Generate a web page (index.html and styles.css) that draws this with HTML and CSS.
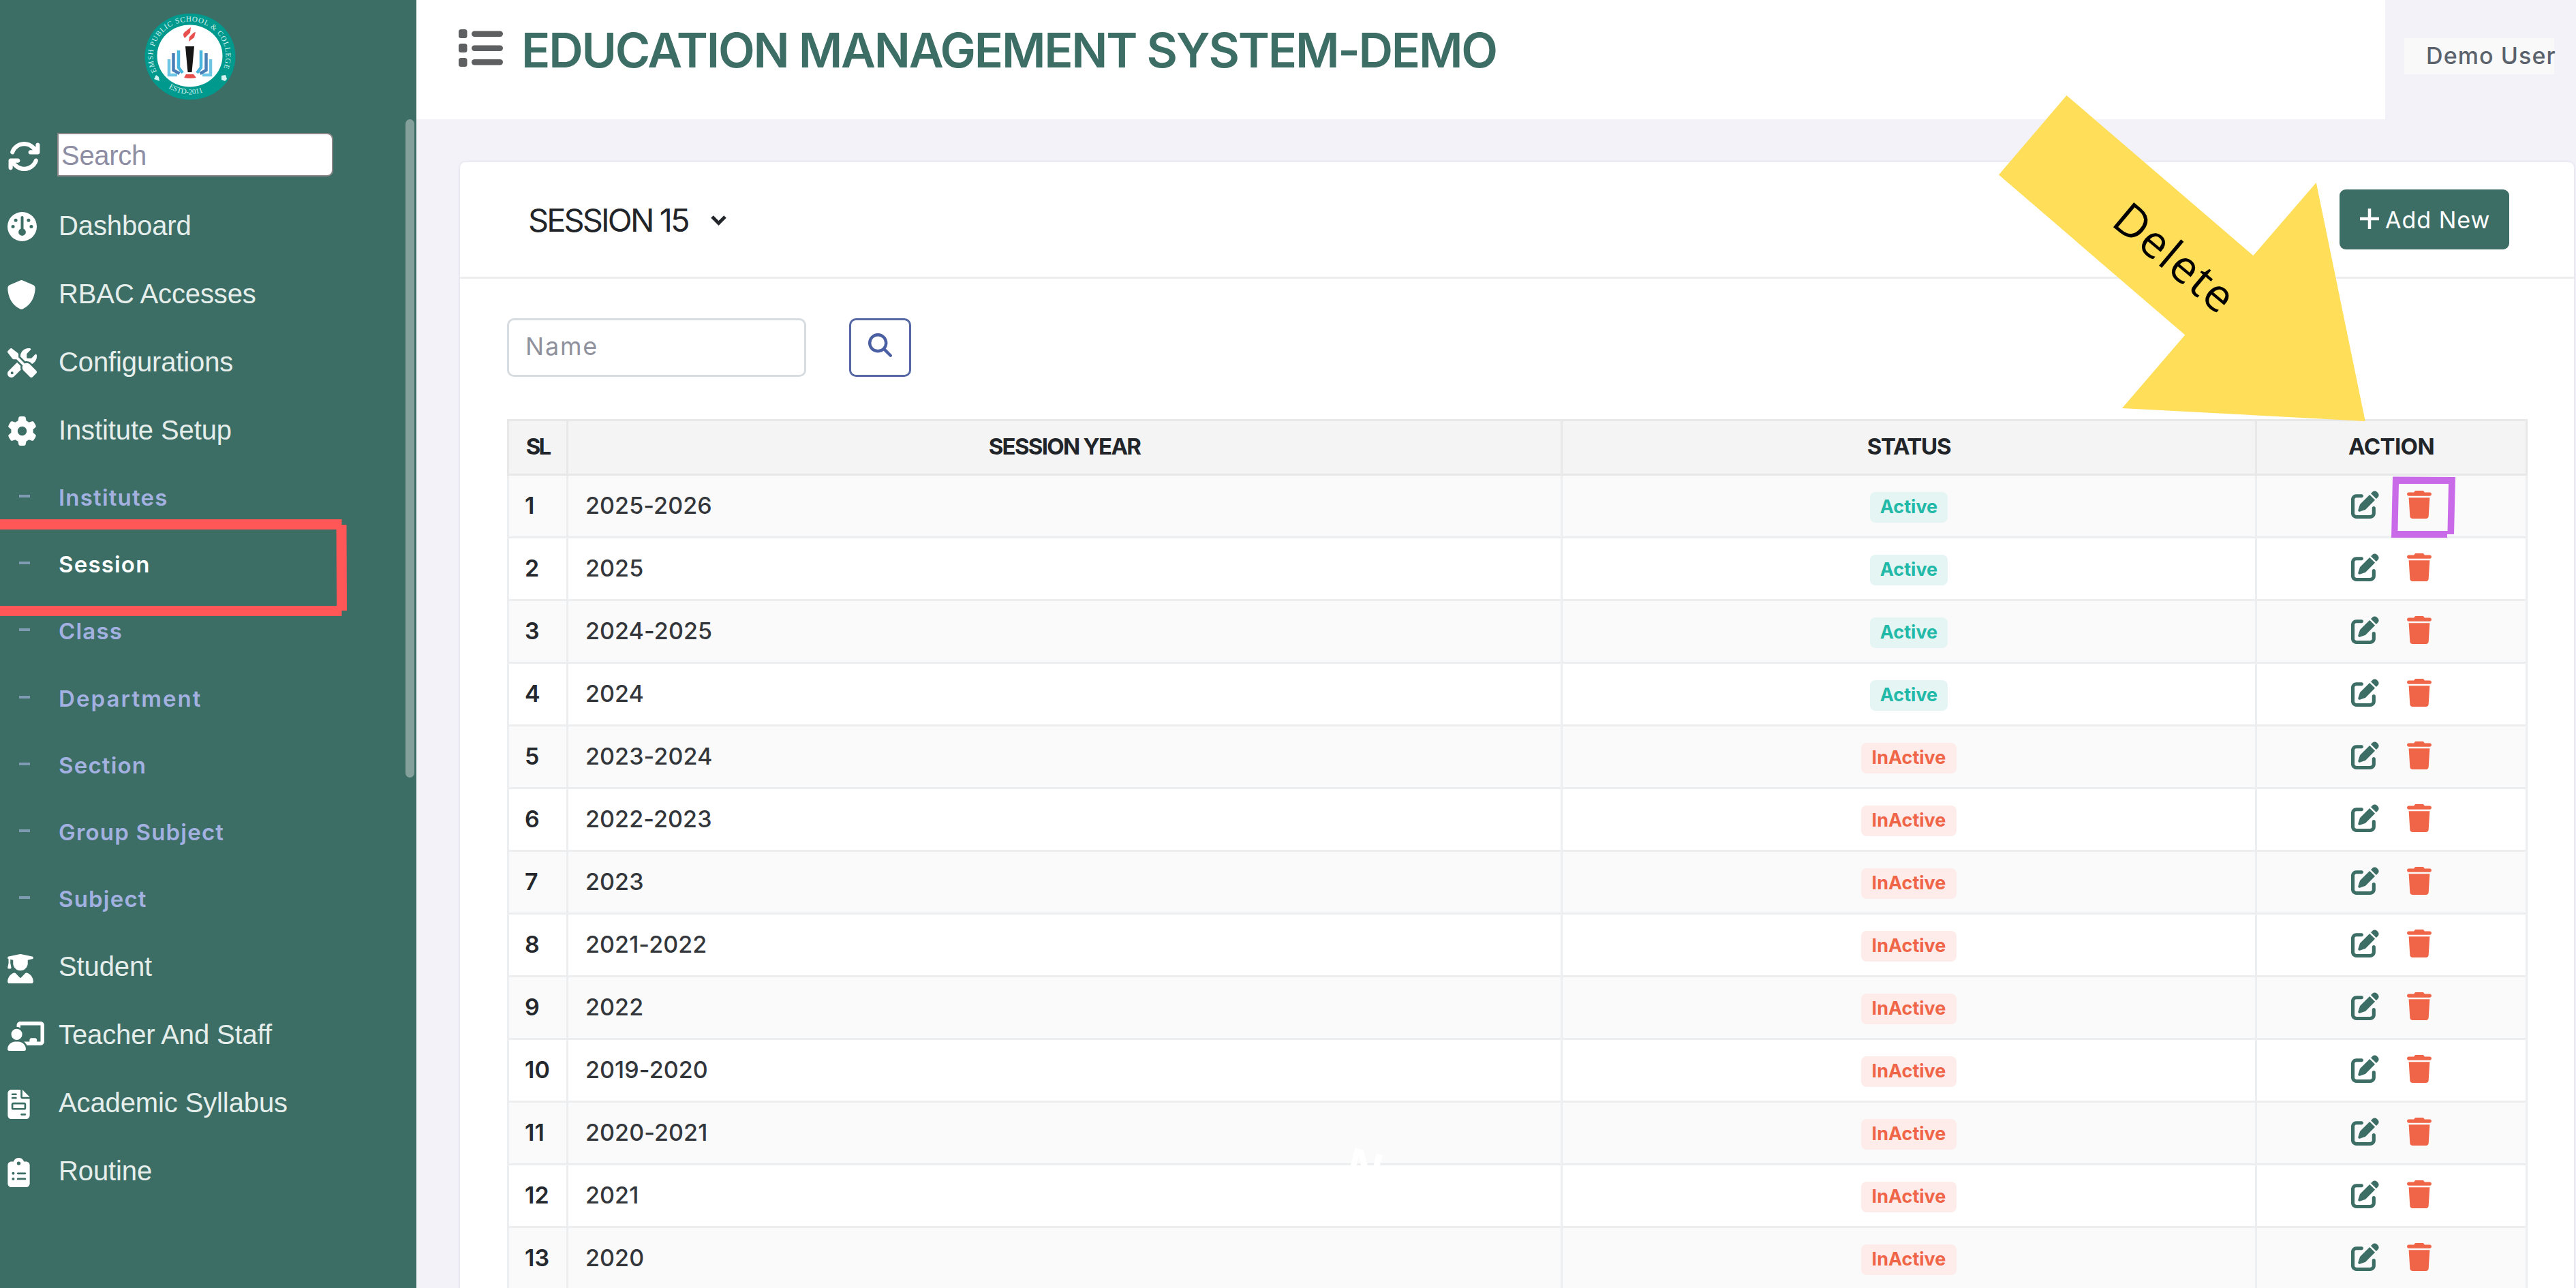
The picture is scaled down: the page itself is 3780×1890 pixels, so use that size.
FILE: index.html
```html
<!DOCTYPE html>
<html lang="en">
<head>
<meta charset="utf-8">
<title>Education Management System - Session</title>
<link rel="stylesheet" href="styles.css">
</head>
<body>
<svg class="sprite" width="0" height="0">
  <symbol id="i-sync" viewBox="0 0 512 512"><path d="M105.1 202.6c7.7-21.8 20.2-42.3 37.8-59.8c62.5-62.5 163.8-62.5 226.3 0L386.3 160H352c-17.7 0-32 14.3-32 32s14.3 32 32 32H463.9c17.7 0 32-14.3 32-32V80c0-17.7-14.3-32-32-32s-32 14.3-32 32v35.2L414.4 97.6c-87.5-87.5-229.3-87.5-316.8 0C73.2 122 55.6 150.7 44.8 181.4c-5.9 16.7 2.9 34.9 19.5 40.8s34.9-2.9 40.8-19.5zM39 289.3c-5 1.5-9.8 4.2-13.7 8.2c-4 4-6.7 8.800-8.100 14c-.3 1.200-.6 2.500-.8 3.800c-.3 1.700-.4 3.400-.4 5.100V432c0 17.700 14.300 32 32 32s32-14.300 32-32V396.900l17.600 17.500c87.500 87.400 229.300 87.400 316.700 0c24.400-24.400 42.100-53.100 52.900-83.800c5.900-16.700-2.900-34.900-19.500-40.800s-34.900 2.900-40.800 19.500c-7.700 21.800-20.200 42.300-37.800 59.800c-62.500 62.500-163.800 62.500-226.300 0L125.600 352H160c17.700 0 32-14.300 32-32s-14.300-32-32-32H48.400c-1.600 0-3.200 .1-4.800 .3s-3.100 .5-4.600 1z"/></symbol>
  <symbol id="i-gauge" viewBox="0 0 512 512"><path fill-rule="evenodd" d="M256 0a256 256 0 1 1 0 512a256 256 0 1 1 0-512zM256 72c-14 0-24 10-24 24V293a64 64 0 1 0 48 0V96c0-14-10-24-24-24zM144 116a30 30 0 1 0 0 60a30 30 0 1 0 0-60zM368 116a30 30 0 1 0 0 60a30 30 0 1 0 0-60zM96 226a30 30 0 1 0 0 60a30 30 0 1 0 0-60zM416 226a30 30 0 1 0 0 60a30 30 0 1 0 0-60z"/></symbol>
  <symbol id="i-shield" viewBox="12 0 512 512"><path d="M256 0c4.600 0 9.200 1 13.400 2.900L457.700 82.800c22 9.300 38.400 31 38.300 57.200c-.5 99.200-41.300 280.700-213.600 363.200c-16.700 8-36.100 8-52.800 0C57.300 420.700 16.500 239.200 16 140c-.1-26.200 16.300-47.900 38.300-57.200L242.700 2.900C246.800 1 251.400 0 256 0z"/></symbol>
  <symbol id="i-tools" viewBox="0 0 512 512"><path d="M78.600 5C69.100-2.400 55.600-1.500 47 7L7 47c-8.500 8.500-9.400 22-2.100 31.600l80 104c4.500 5.900 11.600 9.400 19 9.400h54.100l109 109c-14.700 29-10 65.400 14.300 89.600l112 112c12.500 12.500 32.800 12.500 45.300 0l64-64c12.500-12.500 12.500-32.800 0-45.300l-112-112c-24.200-24.200-60.600-29-89.600-14.300l-109-109V104c0-7.500-3.500-14.500-9.400-19L78.600 5zM19.900 396.100C7.200 408.800 0 426.100 0 444.100C0 481.600 30.400 512 67.900 512c18 0 35.300-7.200 48-19.900L233.700 374.300c-7.800-20.900-9-43.600-3.600-65.100l-61.700-61.700L19.900 396.100zM512 144c0-10.500-1.100-20.700-3.200-30.500c-2.400-11.200-16.100-14.100-24.200-6l-63.900 63.900c-3 3-7.100 4.700-11.300 4.700H352c-8.800 0-16-7.200-16-16V102.600c0-4.200 1.700-8.300 4.700-11.300l63.900-63.900c8.100-8.100 5.200-21.800-6-24.200C388.700 1.100 378.500 0 368 0C288.500 0 224 64.500 224 144l0 .8 85.300 85.300c36-9.100 75.800 .5 104 28.700L429 274.500c49-23 83-72.800 83-130.500zM56 432a24 24 0 1 1 48 0 24 24 0 1 1 -48 0z"/></symbol>
  <symbol id="i-gear" viewBox="0 0 512 512"><path d="M495.900 166.600c3.200 8.700 .5 18.400-6.400 24.600l-43.300 39.400c1.100 8.300 1.700 16.800 1.700 25.400s-.6 17.100-1.700 25.400l43.300 39.400c6.900 6.200 9.600 15.900 6.400 24.600c-4.400 11.900-9.700 23.300-15.800 34.300l-4.700 8.100c-6.600 11-14 21.400-22.100 31.200c-5.900 7.200-15.700 9.600-24.500 6.800l-55.700-17.700c-13.400 10.300-28.200 18.900-44 25.400l-12.500 57.100c-2 9.100-9 16.300-18.200 17.800c-13.800 2.300-28 3.500-42.500 3.500s-28.700-1.200-42.500-3.500c-9.200-1.500-16.200-8.700-18.200-17.800l-12.500-57.100c-15.800-6.500-30.600-15.100-44-25.400L83.100 425.900c-8.800 2.800-18.600 .3-24.500-6.800c-8.100-9.800-15.500-20.200-22.100-31.200l-4.700-8.100c-6.100-11-11.400-22.400-15.800-34.300c-3.200-8.700-.5-18.400 6.400-24.600l43.300-39.400C64.600 273.100 64 264.600 64 256s.6-17.100 1.700-25.400L22.400 191.200c-6.900-6.200-9.600-15.900-6.400-24.600c4.400-11.900 9.700-23.300 15.800-34.300l4.700-8.100c6.600-11 14-21.400 22.100-31.200c5.900-7.200 15.700-9.600 24.500-6.800l55.700 17.700c13.400-10.300 28.200-18.900 44-25.400l12.500-57.100c2-9.100 9-16.300 18.200-17.800C227.300 1.200 241.500 0 256 0s28.700 1.200 42.500 3.500c9.200 1.500 16.200 8.700 18.200 17.800l12.500 57.100c15.800 6.500 30.600 15.100 44 25.400l55.700-17.700c8.800-2.800 18.600-.3 24.500 6.800c8.100 9.800 15.500 20.200 22.100 31.200l4.700 8.100c6.100 11 11.400 22.400 15.800 34.300zM256 336a80 80 0 1 0 0-160 80 80 0 1 0 0 160z"/></symbol>
  <symbol id="i-student" viewBox="0 0 448 512"><path d="M219.300 .5c3.100-.6 6.300-.6 9.400 0l200 40C439.900 42.700 448 52.600 448 64s-8.100 21.300-19.300 23.500L352 102.900V160c0 70.700-57.300 128-128 128S96 230.700 96 160V102.900L48 93.300v65.100l15.700 78.400c.9 4.700-.3 9.600-3.300 13.300s-7.600 5.900-12.400 5.900H16c-4.800 0-9.300-2.100-12.400-5.900s-4.300-8.600-3.300-13.300L16 158.400V86.600C6.500 83.300 0 74.300 0 64C0 52.600 8.100 42.700 19.300 40.500l200-40zM111.900 327.700c10.500-3.400 21.800 .4 29.400 8.500l71 75.500c6.300 6.700 17 6.700 23.300 0l71-75.500c7.600-8.100 18.900-11.900 29.400-8.500C401 348.600 448 409.400 448 481.300c0 17-13.800 30.700-30.700 30.700H30.700C13.800 512 0 498.200 0 481.300c0-71.900 47-132.700 111.900-153.600z"/></symbol>
  <symbol id="i-teacher" viewBox="0 0 640 512"><path d="M160 64c0-35.300 28.700-64 64-64H576c35.300 0 64 28.700 64 64V352c0 35.300-28.700 64-64 64H336.800c-11.800-25.500-29.900-47.500-52.400-64H384V320c0-17.700 14.300-32 32-32h64c17.700 0 32 14.300 32 32v32h64V64L224 64v49.100C205.200 102.200 183.300 96 160 96V64zm0 64a96 96 0 1 1 0 192 96 96 0 1 1 0-192zM133.300 352h53.300C260.300 352 320 411.700 320 485.300c0 14.700-11.900 26.700-26.700 26.700H26.700C11.900 512 0 500.100 0 485.300C0 411.700 59.700 352 133.300 352z"/></symbol>
  <symbol id="i-file" viewBox="0 0 384 512"><path fill-rule="evenodd" d="M64 0C28.700 0 0 28.700 0 64V448c0 35.300 28.700 64 64 64H320c35.300 0 64-28.700 64-64V160H256c-17.700 0-32-14.300-32-32V0H64zM256 0V128H384L256 0zM80 64h64c8.800 0 16 7.200 16 16s-7.200 16-16 16H80c-8.800 0-16-7.200-16-16s7.200-16 16-16zm0 64h64c8.800 0 16 7.200 16 16s-7.200 16-16 16H80c-8.800 0-16-7.200-16-16s7.200-16 16-16zm16 96H288c17.700 0 32 14.300 32 32v64c0 17.700-14.300 32-32 32H96c-17.700 0-32-14.300-32-32V256c0-17.700 14.300-32 32-32zm0 32v64H288V256H96zM240 416h64c8.800 0 16 7.200 16 16s-7.200 16-16 16H240c-8.800 0-16-7.200-16-16s7.200-16 16-16z"/></symbol>
  <symbol id="i-clipboard" viewBox="0 0 384 512"><path fill-rule="evenodd" d="M192 0c-41.800 0-77.400 26.700-90.500 64H64C28.700 64 0 92.700 0 128V448c0 35.300 28.700 64 64 64H320c35.300 0 64-28.700 64-64V128c0-35.300-28.700-64-64-64H282.500C269.400 26.700 233.800 0 192 0zm0 64a32 32 0 1 1 0 64 32 32 0 1 1 0-64zM72 272a24 24 0 1 1 48 0 24 24 0 1 1 -48 0zm104-16H304c8.800 0 16 7.200 16 16s-7.200 16-16 16H176c-8.800 0-16-7.200-16-16s7.200-16 16-16zM72 368a24 24 0 1 1 48 0 24 24 0 1 1 -48 0zm88 0c0-8.800 7.200-16 16-16H304c8.800 0 16 7.200 16 16s-7.200 16-16 16H176c-8.800 0-16-7.200-16-16z"/></symbol>
  <symbol id="i-edit" viewBox="0 0 512 512"><path d="M471.600 21.700c-21.900-21.900-57.300-21.900-79.200 0L362.300 51.700l97.900 97.900 30.100-30.100c21.900-21.900 21.900-57.300 0-79.200L471.600 21.700zm-299.200 220c-6.100 6.100-10.800 13.600-13.500 21.900l-29.600 88.800c-2.900 8.600-.6 18.100 5.800 24.600s15.900 8.700 24.600 5.800l88.800-29.600c8.200-2.700 15.700-7.400 21.900-13.500L437.700 172.300 339.700 74.300 172.400 241.700zM96 64C43 64 0 107 0 160V416c0 53 43 96 96 96H352c53 0 96-43 96-96V320c0-17.700-14.300-32-32-32s-32 14.300-32 32v96c0 17.700-14.300 32-32 32H96c-17.700 0-32-14.300-32-32V160c0-17.700 14.300-32 32-32h96c17.700 0 32-14.300 32-32s-14.300-32-32-32H96z"/></symbol>
  <symbol id="i-trash" viewBox="0 0 448 512"><path d="M135.200 17.700L128 32H32C14.300 32 0 46.300 0 64S14.300 96 32 96H416c17.700 0 32-14.300 32-32s-14.300-32-32-32H320l-7.200-14.300C307.400 6.800 296.300 0 284.200 0H163.800c-12.100 0-23.200 6.800-28.600 17.700zM416 128H32L53.200 467c1.600 25.300 22.600 45 47.900 45H346.900c25.300 0 46.300-19.700 47.900-45L416 128z"/></symbol>
  <symbol id="i-search" viewBox="0 0 512 512"><path d="M416 208c0 45.900-14.900 88.300-40 122.700L502.600 457.400c12.500 12.500 12.500 32.800 0 45.300s-32.800 12.500-45.300 0L330.700 376c-34.400 25.200-76.800 40-122.700 40C93.100 416 0 322.900 0 208S93.100 0 208 0S416 93.100 416 208zM208 352a144 144 0 1 0 0-288 144 144 0 1 0 0 288z"/></symbol>
</svg>

<div class="app">
  <aside class="sidebar">
    <svg class="logo" viewBox="0 0 134 128">
      <defs>
        <path id="ring-top" d="M18 86A53.500 51 0 1 1 114 86"/>
        <path id="ring-bottom" d="M14 84A57 56 0 0 0 120 84"/>
      </defs>
      <ellipse cx="67" cy="64" rx="66.500" ry="63.300" fill="#00998d"/>
      <ellipse cx="66.500" cy="63" rx="48" ry="45.500" fill="#fff"/>
      <text class="ring-text"><textPath href="#ring-top" textLength="205">EMSH PUBLIC SCHOOL &amp; COLLEGE</textPath></text>
      <text class="ring-text"><textPath href="#ring-bottom" startOffset="34">ESTD-2011</textPath></text>
      <path fill="#d5f3f0" d="M14 97l3-6 4 3 1 6-5-2zM113 92l6-1 2 6-3 3-5-2z"/>
      <path fill="#e8504d" d="M68 21l-1 8-8 8q-4-6 0-9zM75 28l-2 8-8 6 1-7 6-6z"/>
      <path fill="#161616" d="M60 49h13l-3.500 38h-6z"/>
      <path fill="#e8504d" d="M61 90h11l4 5q-9 2-18 0z"/>
      <g fill="none" stroke-width="4.500">
        <path stroke="#6ec6e4" d="M36 68v23h12M97 68v23H85"/>
        <path stroke="#4a7fb8" d="M42.500 59v25l9 5M90.500 59v25l-9 5"/>
        <path stroke="#48b5dc" d="M50 55v25l6 8M83 55v25l-6 8"/>
      </g>
    </svg>
    <div class="find">
      <svg class="sync"><use href="#i-sync"/></svg>
      <div class="find-box">Search</div>
    </div>
    <nav class="menu">
      <a class="item"><svg><use href="#i-gauge"/></svg><span>Dashboard</span></a>
      <a class="item"><svg><use href="#i-shield"/></svg><span>RBAC Accesses</span></a>
      <a class="item"><svg><use href="#i-tools"/></svg><span>Configurations</span></a>
      <a class="item"><svg><use href="#i-gear"/></svg><span>Institute Setup</span></a>
      <a class="sub">Institutes</a>
      <a class="sub current">Session</a>
      <a class="sub">Class</a>
      <a class="sub wide">Department</a>
      <a class="sub">Section</a>
      <a class="sub">Group Subject</a>
      <a class="sub">Subject</a>
      <a class="item"><svg class="w38"><use href="#i-student"/></svg><span>Student</span></a>
      <a class="item"><svg class="w54"><use href="#i-teacher"/></svg><span>Teacher And Staff</span></a>
      <a class="item"><svg class="w32"><use href="#i-file"/></svg><span>Academic Syllabus</span></a>
      <a class="item"><svg class="w32"><use href="#i-clipboard"/></svg><span>Routine</span></a>
    </nav>
    <div class="scroll-thumb"></div>
  </aside>

  <div class="page">
    <header class="topbar">
      <div class="brand">
        <svg class="list" viewBox="0 0 66 56"><g fill="#5e5f61"><rect width="12.500" height="13" rx="3.500"/><rect y="21" width="12.500" height="13" rx="3.500"/><rect y="42" width="12.500" height="13" rx="3.500"/><rect x="19" y="2.500" width="46" height="8.500" rx="4.200"/><rect x="19" y="23.500" width="46" height="8.500" rx="4.200"/><rect x="19" y="44" width="46" height="8.500" rx="4.200"/></g></svg>
        <h1>EDUCATION MANAGEMENT SYSTEM-DEMO</h1>
      </div>
      <div class="user"><span>Demo User</span></div>
    </header>

    <main class="card">
      <div class="card-head">
        <h2>SESSION 15</h2>
        <svg class="chev" viewBox="0 0 25 18"><path d="M3 4l9.500 9.500L22 4" fill="none" stroke="#23272b" stroke-width="5"/></svg>
        <button class="add"><svg viewBox="0 0 28 30"><path d="M14 0v30M0 15h28" stroke="#fff" stroke-width="4.500"/></svg><span>Add New</span></button>
      </div>
      <div class="card-body">
        <div class="filter">
          <div class="name-box">Name</div>
          <button class="search"><svg><use href="#i-search"/></svg></button>
        </div>
        <table>
          <colgroup><col class="c-sl"><col class="c-year"><col class="c-status"><col class="c-action"></colgroup>
          <thead><tr><th class="sl">SL</th><th>SESSION YEAR</th><th class="st">STATUS</th><th class="ac">ACTION</th></tr></thead>
          <tbody>
            <tr><td>1</td><td>2025-2026</td><td><b class="on">Active</b></td><td><div class="acts"><svg class="ed"><use href="#i-edit"/></svg><svg class="tr"><use href="#i-trash"/></svg></div></td></tr>
            <tr><td>2</td><td>2025</td><td><b class="on">Active</b></td><td><div class="acts"><svg class="ed"><use href="#i-edit"/></svg><svg class="tr"><use href="#i-trash"/></svg></div></td></tr>
            <tr><td>3</td><td>2024-2025</td><td><b class="on">Active</b></td><td><div class="acts"><svg class="ed"><use href="#i-edit"/></svg><svg class="tr"><use href="#i-trash"/></svg></div></td></tr>
            <tr><td>4</td><td>2024</td><td><b class="on">Active</b></td><td><div class="acts"><svg class="ed"><use href="#i-edit"/></svg><svg class="tr"><use href="#i-trash"/></svg></div></td></tr>
            <tr><td>5</td><td>2023-2024</td><td><b class="off">InActive</b></td><td><div class="acts"><svg class="ed"><use href="#i-edit"/></svg><svg class="tr"><use href="#i-trash"/></svg></div></td></tr>
            <tr><td>6</td><td>2022-2023</td><td><b class="off">InActive</b></td><td><div class="acts"><svg class="ed"><use href="#i-edit"/></svg><svg class="tr"><use href="#i-trash"/></svg></div></td></tr>
            <tr><td>7</td><td>2023</td><td><b class="off">InActive</b></td><td><div class="acts"><svg class="ed"><use href="#i-edit"/></svg><svg class="tr"><use href="#i-trash"/></svg></div></td></tr>
            <tr><td>8</td><td>2021-2022</td><td><b class="off">InActive</b></td><td><div class="acts"><svg class="ed"><use href="#i-edit"/></svg><svg class="tr"><use href="#i-trash"/></svg></div></td></tr>
            <tr><td>9</td><td>2022</td><td><b class="off">InActive</b></td><td><div class="acts"><svg class="ed"><use href="#i-edit"/></svg><svg class="tr"><use href="#i-trash"/></svg></div></td></tr>
            <tr><td>10</td><td>2019-2020</td><td><b class="off">InActive</b></td><td><div class="acts"><svg class="ed"><use href="#i-edit"/></svg><svg class="tr"><use href="#i-trash"/></svg></div></td></tr>
            <tr><td>11</td><td>2020-2021</td><td><b class="off">InActive</b></td><td><div class="acts"><svg class="ed"><use href="#i-edit"/></svg><svg class="tr"><use href="#i-trash"/></svg></div></td></tr>
            <tr><td>12</td><td>2021</td><td><b class="off">InActive</b></td><td><div class="acts"><svg class="ed"><use href="#i-edit"/></svg><svg class="tr"><use href="#i-trash"/></svg></div></td></tr>
            <tr><td>13</td><td>2020</td><td><b class="off">InActive</b></td><td><div class="acts"><svg class="ed"><use href="#i-edit"/></svg><svg class="tr"><use href="#i-trash"/></svg></div></td></tr>
          </tbody>
        </table>
      </div>
    </main>
  </div>

  <!-- annotation layer: callout arrow and highlight frames -->
  <svg class="notes" viewBox="0 0 3780 1890">
    <path fill="#ff5757" d="M0 762H501.500V770H508.500L509 896H501.500V904H0V889H494L493.500 777H0z"/>
    <path fill="#ffde59" d="M3032.500 140L3306.400 375 3398.800 268 3470.700 618 3114 599 3206.300 491.500 2933 256.500z"/>
    <text class="note" transform="translate(3096 329) rotate(40)">Delete</text>
    <path fill="#c96be8" fill-rule="evenodd" d="M3511 699.500L3603 700 3601 784H3591V789H3509zM3520 710L3518.500 779H3591.500L3593 710z"/>
    <text class="note ghost" transform="translate(1971 1729) rotate(14)">N</text>
  </svg>
</div>
</body>
</html>
```
FILE: styles.css
```css
* { box-sizing: border-box; }
body { margin: 0; width: 3780px; height: 1890px; overflow: hidden; background: #f3f2f9; font-family: Inter, "Open Sans", sans-serif; color: #212529; }
h1, h2 { margin: 0; }
button { font: inherit; padding: 0; border: 0; }
.sprite { position: absolute; }
.app { position: relative; display: flex; width: 3780px; height: 1890px; overflow: hidden; }

/* sidebar */
.sidebar { position: relative; flex: none; width: 611px; height: 1890px; padding-top: 19px; background: #3c6e66; }
.logo { display: block; width: 134px; height: 128px; margin-left: 212px; }
.ring-text { font: 400 11px "Liberation Serif", serif; fill: #d5f3f0; }
.find { display: flex; align-items: center; height: 64px; margin-top: 48px; padding-left: 11px; }
.sync { width: 49px; height: 49px; margin-top: 4px; fill: #fff; }
.find-box { width: 405px; height: 64px; margin-left: 24px; padding-left: 4px; border: 2px solid #8a8587; border-radius: 1px 9px 9px 1px; background: #fff; color: #8d8da3; font: 40px/62px "Liberation Sans", Arial, sans-serif; letter-spacing: -.3px; }
.menu { display: flex; flex-direction: column; margin-top: 22px; }
.item { display: flex; align-items: center; height: 100px; color: #e6eeec; font: 40px "Liberation Sans", Arial, sans-serif; letter-spacing: -.12px; white-space: nowrap; }
.item svg { flex: none; width: 43px; height: 43px; margin: 2px 32px 0 11px; fill: #fff; }
.item .w38 { width: 38px; margin-right: 37px; margin-top: 6px; }
.item .w54 { width: 54px; margin-right: 21px; margin-top: 5px; }
.item .w32 { width: 33px; margin-right: 42px; margin-top: 5px; }
.sub { display: flex; align-items: center; height: 98.2px; padding-left: 28px; color: #a3b1e1; font-size: 33px; font-weight: 600; letter-spacing: 1.2px; white-space: nowrap; }
.sub::before { content: ""; width: 16px; height: 4px; margin: -4px 42px 0 0; background: #7e9bb2; }
.sub.current { color: #fff; }
.sub.wide { letter-spacing: 2.1px; }
.scroll-thumb { position: absolute; left: 595px; top: 175px; width: 13px; height: 966px; border-radius: 7px; background: #84a09a; }

/* top bar */
.page { flex: 1; min-width: 0; }
.topbar { display: flex; height: 175px; }
.brand { display: flex; width: 2889px; padding-left: 62px; background: #fff; }
.list { width: 66px; height: 56px; margin-top: 43px; }
h1 { margin: 32px 0 0 26px; color: #3c6e66; font-size: 70px; line-height: 84px; font-weight: 600; letter-spacing: -2.25px; white-space: nowrap; }
.user { padding: 56px 0 0 28px; }
.user span { display: block; width: 220px; height: 53px; padding-left: 32px; background: #f9f9f9; color: #5b626b; font-size: 34px; line-height: 51px; font-weight: 500; letter-spacing: 1.1px; white-space: nowrap; }

/* card */
.card { width: 3102px; height: 1700px; margin: 63px 0 0 64px; border-radius: 8px; background: #fff; box-shadow: 0 0 4px rgba(60, 60, 110, .12); }
.card-head { display: flex; align-items: center; height: 171px; padding: 0 95px 0 100px; border-bottom: 3px solid #ecedef; }
h2 { font-size: 47px; font-weight: 400; letter-spacing: -2.9px; }
.chev { width: 25px; height: 18px; margin: 2px 0 0 32px; }
.add { display: flex; align-items: center; width: 249px; height: 88px; margin-left: auto; padding-left: 30px; border-radius: 9px; background: #3c6e66; color: #fff; font-size: 34px; font-weight: 400; letter-spacing: 1px; white-space: nowrap; }
.add svg { width: 28px; height: 30px; margin-right: 9px; margin-top: -3px; }
.card-body { padding: 58px 70px 0 69px; }
.filter { display: flex; gap: 63px; }
.name-box { width: 439px; height: 86px; padding-left: 24px; border: 3px solid #d7dce1; border-radius: 10px; color: #8f929c; font-size: 36px; line-height: 76px; letter-spacing: 1.8px; }
.search { display: flex; justify-content: center; width: 91px; height: 86px; padding-top: 19px; border: 3px solid #5468a4; border-radius: 10px; background: #fff; }
.search svg { width: 35px; height: 35px; fill: #4a60a2; }

/* table */
table { width: 2964px; margin-top: 62px; table-layout: fixed; border-collapse: collapse; }
.c-sl { width: 87px; }
.c-year { width: 1459px; }
.c-status { width: 1019px; }
.c-action { width: 397px; }
th, td { padding: 0; border: 3px solid #eceeef; }
th { height: 80px; padding-bottom: 3px; background: #f4f4f4; border-color: #e8e8e9; font-size: 33px; font-weight: 700; letter-spacing: -1.7px; }
th.sl { letter-spacing: -3px; }
th.st { letter-spacing: -1.3px; }
th.ac { letter-spacing: -.6px; }
td { height: 92px; padding: 0 0 2px 25px; font-size: 34px; font-weight: 500; letter-spacing: .1px; color: #33373b; }
td:first-child { padding-left: 23px; font-weight: 600; color: #25292d; }
td:nth-child(n+3) { padding: 0; text-align: center; line-height: 0; }
tbody tr:nth-child(odd) { background: #fafafa; }
td b { display: inline-block; height: 45px; margin-top: 4px; border-radius: 8px; font-size: 27px; line-height: 43px; font-weight: 700; letter-spacing: 0; }
.on { width: 114px; color: #22b9a8; background: #e4f5f3; }
.off { width: 140px; color: #f06548; background: #fdecea; }
.acts { display: flex; justify-content: center; gap: 41px; height: 46px; }
.ed { width: 41px; height: 41px; fill: #3c6e66; }
.tr { width: 36px; height: 41px; fill: #f06548; }

/* annotations */
.notes { position: absolute; left: 0; top: 0; width: 3780px; height: 1890px; }
.note { font: 400 66px "Open Sans", sans-serif; letter-spacing: 1.8px; fill: #000; }
.note.ghost { font-weight: 700; fill: #fff; }
```
